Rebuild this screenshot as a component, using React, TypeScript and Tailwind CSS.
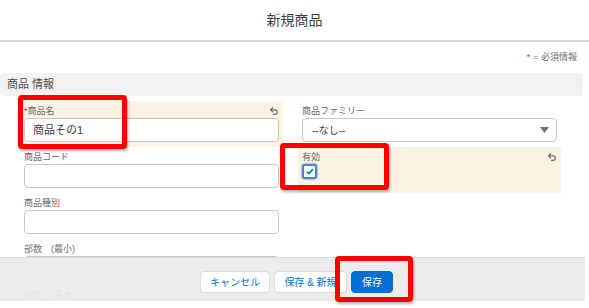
const font = {
  fontFamily: '"Liberation Sans", "Noto Sans CJK JP", sans-serif',
};

const UndoIcon = () => (
  <svg
    width="10"
    height="10"
    viewBox="0 0 24 24"
    fill="none"
    stroke="#706e6b"
    strokeWidth="3"
    strokeLinecap="round"
    strokeLinejoin="round"
  >
    <path d="M9 14 4 9l5-5" />
    <path d="M4 9h10.5a5.5 5.5 0 0 1 5.5 5.5a5.5 5.5 0 0 1-5.5 5.5H11" />
  </svg>
);

interface FieldProps {
  label: string;
  required?: boolean;
  changed?: boolean;
  children?: React.ReactNode;
}

const Field: React.FC<FieldProps> = ({ label, required, changed, children }) => {
  return (
    <div
      className={`h-[46px] px-[4px] pt-[3px] ${changed ? "bg-[#faf3e3]" : ""}`}
    >
      <div className="flex h-[14px] items-center justify-between text-[9px] leading-[14px] text-[#6b6b6b]">
        <span>
          {required && <span className="text-[#c23934]">*</span>}
          {label}
        </span>
        {changed && <UndoIcon />}
      </div>
      {children}
    </div>
  );
};

const TextInput: React.FC<{ value?: string }> = ({ value }) => (
  <div className="flex h-[24px] items-center rounded-[4px] border border-[#c9c7c5] bg-white px-[8px] text-[11px] text-[#3e3e3c]">
    {value}
  </div>
);

export default function App() {
  return (
    <div
      className="relative h-[308px] w-[589px] overflow-hidden bg-white"
      style={font}
    >
      {/* Header */}
      <header className="flex h-[40px] items-center justify-center text-[14px] text-[#3e3e3c]">
        新規商品
      </header>
      <div className="h-[2px] bg-[#d8d8d8]" />

      <div className="h-[259px] w-[585px] overflow-hidden">
        <div className="flex justify-end pr-[8px] pt-[9px] text-[9px] leading-[12px] text-[#6b6b6b]">
          <span className="text-[#c23934]">*</span>
          <span className="ml-[3px]">= 必須情報</span>
        </div>

        {/* Section */}
        <div className="mt-[10px] flex h-[23px] w-[583px] items-center rounded-[4px] bg-[#f3f2f2] pl-[7px] text-[11px] text-[#4a4a4a]">
          商品 情報
        </div>

        <div className="mt-[5px] grid grid-cols-[263px_263px] gap-x-[15px] pl-[20px]">
          <Field label="商品名" required changed>
            <TextInput value="商品その1" />
          </Field>
          <Field label="商品ファミリー">
            <div className="flex h-[24px] items-center justify-between rounded-[4px] border border-[#c9c7c5] bg-white pl-[9px] pr-[7px] text-[10px] text-[#3e3e3c]">
              <span>--なし--</span>
              <svg width="9" height="6" viewBox="0 0 9 6">
                <path d="M0 0h9L4.5 6z" fill="#706e6b" />
              </svg>
            </div>
          </Field>

          <Field label="商品コード">
            <TextInput />
          </Field>
          <Field label="有効" changed>
            <div className="flex h-[15px] w-[15px] items-center justify-center rounded-[3px] border-2 border-[#4a86c9] bg-white shadow-[0_0_2px_#1b5297]">
              <svg width="8" height="7" viewBox="0 0 8 7">
                <path
                  d="M1 3.8 3 5.6 7 1"
                  fill="none"
                  stroke="#0070d2"
                  strokeWidth="1.6"
                />
              </svg>
            </div>
          </Field>

          <Field label="商品種別">
            <TextInput />
          </Field>
          <div />

          <Field label="部数　(最小)">
            <TextInput />
          </Field>
          <div />

          <Field label="部数　(最大)">
            <TextInput />
          </Field>
          <div />
        </div>
      </div>

      {/* Footer */}
      <div className="absolute left-0 top-[257px] flex h-[44px] w-[585px] items-start justify-center gap-[4px] border-t border-[#dcdcdc] bg-[#ebebeb]/[0.93] pl-[8px] pt-[13px]">
        <button className="h-[22px] w-[70px] rounded-[4px] border border-[#dddbda] bg-white text-[10px] text-[#0070d2]">
          キャンセル
        </button>
        <button className="h-[22px] w-[73px] rounded-[4px] border border-[#dddbda] bg-white text-[10px] text-[#0070d2]">
          保存 &amp; 新規
        </button>
        <button className="h-[22px] w-[42px] rounded-[4px] border border-[#0070d2] bg-[#0070d2] text-[10px] text-white">
          保存
        </button>
      </div>

      {/* Annotations */}
      <div className="absolute left-[18px] top-[95px] h-[54px] w-[109px] rounded-[4px] border-[5px] border-[#ff0000] shadow-[1px_2px_3px_rgba(0,0,0,0.3)]" />
      <div className="absolute left-[280px] top-[143px] h-[47px] w-[109px] rounded-[4px] border-[5px] border-[#ff0000] shadow-[1px_2px_3px_rgba(0,0,0,0.3)]" />
      <div className="absolute left-[335px] top-[256px] h-[46px] w-[78px] rounded-[4px] border-[5px] border-[#ff0000] shadow-[1px_2px_3px_rgba(0,0,0,0.3)]" />
    </div>
  );
}
